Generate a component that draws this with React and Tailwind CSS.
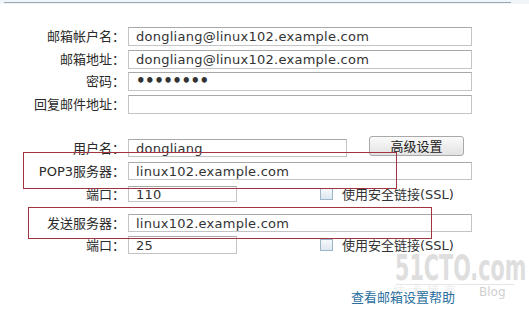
import React from "react";

const font = { fontFamily: '"DejaVu Sans", "Noto Sans CJK SC", sans-serif' };

function Row({ label, h = "h-[19px]", className = "", children }) {
  return (
    <div className={`flex items-center ${h} ${className}`}>
      <div className="w-[126px] shrink-0 text-right text-[13px] leading-none text-[#2a2a2a] pr-[1px]">{label}</div>
      <div className="ml-[2px] flex items-center h-full">{children}</div>
    </div>
  );
}

function Field({ w, value, className = "" }) {
  return (
    <div
      className={`h-full border border-[#c4c4c4] border-t-[#a8a8a8] bg-white pl-[7px] flex items-center text-[13px] tracking-[0.25px] leading-none text-[#333] ${w} ${className}`}
    >
      {value}
    </div>
  );
}

function Ssl() {
  return (
    <div className="flex items-center ml-[83px]">
      <div className="w-[13px] h-[12px] border border-[#9db7c9] bg-gradient-to-b from-[#f4f8fb] to-[#dfe8ef]" />
      <span className="ml-[9px] text-[13px] leading-none text-[#333]">使用安全链接(SSL)</span>
    </div>
  );
}

export default function App() {
  return (
    <div className="relative w-[529px] h-[317px] bg-white overflow-hidden" style={font}>
      {/* top strip */}
      <div className="h-[4px] bg-[#f0f5fa] pt-[2px]">
        <div className="ml-[4px] w-[507px] h-[1px] bg-[#9aa6b2]" />
      </div>

      <div className="mt-[23px] flex flex-col">
        <Row label="邮箱帐户名：">
          <Field w="w-[344px]" value="dongliang@linux102.example.com" />
        </Row>
        <Row label="邮箱地址：" className="mt-[4px]">
          <Field w="w-[344px]" value="dongliang@linux102.example.com" />
        </Row>
        <Row label="密码：" className="mt-[3px]">
          <Field w="w-[344px]" value={<span className="text-[15px] font-bold tracking-[-0.5px]">••••••••</span>} />
        </Row>
        <Row label="回复邮件地址：" className="mt-[4px]">
          <Field w="w-[344px]" value="" />
        </Row>

        <Row label="用户名：" h="h-[18px]" className="mt-[25px]">
          <Field w="w-[219px]" value="dongliang" />
          <button className="ml-[22px] w-[95px] h-[20px] -mt-[4px] rounded-[3px] border border-[#a9a9a9] bg-gradient-to-b from-[#fbfbfb] to-[#e2e2e2] text-[13px] leading-none text-[#222]">
            高级设置
          </button>
        </Row>
        <Row label="POP3服务器：" h="h-[18px]" className="mt-[5px]">
          <Field w="w-[344px]" value="linux102.example.com" />
        </Row>
        <Row label="端口：" h="h-[16px]" className="mt-[6px]">
          <Field w="w-[109px]" value="110" />
          <Ssl />
        </Row>
        <Row label="发送服务器：" h="h-[18px]" className="mt-[12px]">
          <Field w="w-[344px]" value="linux102.example.com" />
        </Row>
        <Row label="端口：" h="h-[18px]" className="mt-[4px]">
          <Field w="w-[109px]" value="25" />
          <Ssl />
        </Row>
      </div>

      {/* watermark */}
      <div
        className="absolute left-[395px] top-[250px] text-[36px] font-bold leading-none text-[#dedede] [transform:scaleX(0.64)] origin-left"
        style={{ fontFamily: '"DejaVu Sans Condensed", "DejaVu Sans", sans-serif' }}
      >
        51CTO.com
      </div>
      <div className="absolute left-[396px] top-[284px] w-[118px] h-[1px] bg-[#e6e6e6]" />
      <div className="absolute left-[393px] top-[286px] text-[12px] tracking-[5px] leading-none text-[#eeeeee]">技术博客</div>
      <div className="absolute left-[479px] top-[286px] text-[12px] leading-none text-[#d0d0d0]">Blog</div>

      <a className="absolute left-[351px] top-[291px] text-[13px] leading-none text-[#2b6f9e]">查看邮箱设置帮助</a>

      {/* red highlight boxes */}
      <div className="absolute left-[23px] top-[152px] w-[374px] h-[37px] border-[1.5px] border-[#a1353f]" />
      <div className="absolute left-[28px] top-[207px] w-[404px] h-[32px] border-[1.5px] border-[#a1353f]" />
    </div>
  );
}
